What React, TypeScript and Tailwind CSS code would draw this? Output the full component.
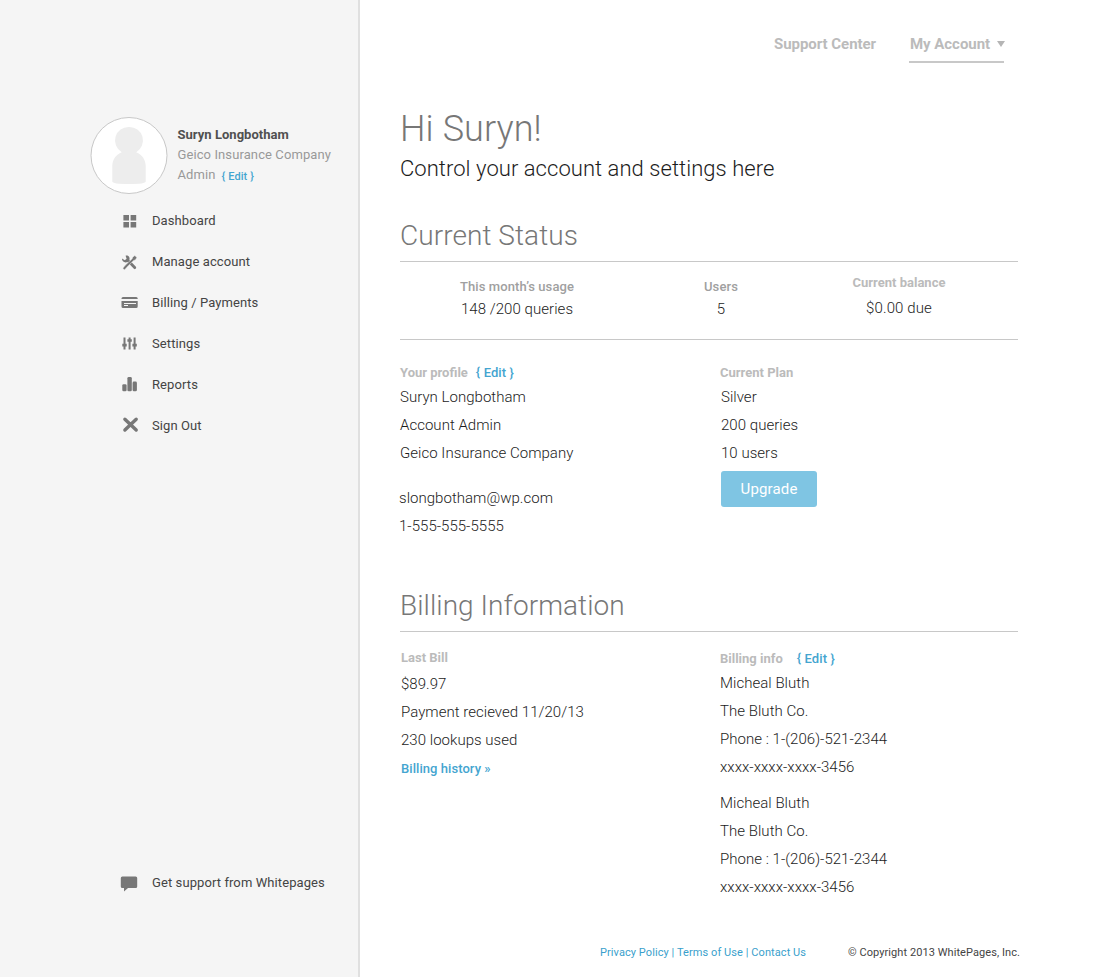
import type { ReactNode } from "react";

const navItems: { label: string; icon: ReactNode }[] = [
  {
    label: "Dashboard",
    icon: (
      <path d="M3.400 5h5.600v5.600H3.400zM10.600 5h5.600v5.600h-5.600zM3.400 12h5.600v5.600H3.400zM10.600 12h5.600v5.600h-5.600z" />
    ),
  },
  {
    label: "Manage account",
    icon: (
      <>
        <path d="M2 7.600 4.800 9.300 6.600 7.800 5.600 4.700C8.300 4.100 10.300 6.300 9.400 9L15.900 15.800C16.900 17.100 15.300 18.900 13.900 17.800L7.400 11.100C4.700 12.400 1.700 10.400 2 7.600Z" />
        <path
          d="M14.800 4.600 16.900 6.500 15.400 8.900 13.700 9.400 7.100 16.100 4.500 18.900 2.800 17.200 5.200 14.300 12.200 7.700 12.600 6.200Z"
          stroke="#f5f5f5"
          strokeWidth=".5"
        />
      </>
    ),
  },
  {
    label: "Billing / Payments",
    icon: (
      <>
        <path d="M3 5h13.200a1.500 1.500 0 0 1 1.500 1.500V7H1.500v-.5A1.500 1.500 0 0 1 3 5Z" />
        <path
          fillRule="evenodd"
          d="M1.500 9h16.200v5.500a1.500 1.500 0 0 1-1.500 1.500H3a1.500 1.500 0 0 1-1.500-1.500ZM4 11v1h12v-1ZM4 13v1h4v-1Z"
        />
      </>
    ),
  },
  {
    label: "Settings",
    icon: (
      <>
        <path d="M3.500 4.500h2v12h-2zM8.600 4.500h2v12h-2zM13.600 4.500h2v12h-2z" />
        <path d="M2.300 10.800h4.400v2.600H2.300zM7.400 6.200h4.400v2.600H7.400zM12.400 10.800h4.400v2.600h-4.400z" />
      </>
    ),
  },
  {
    label: "Reports",
    icon: (
      <>
        <rect x="2.300" y="10.300" width="4.300" height="7" rx="1.300" />
        <rect x="7.400" y="2.900" width="4.400" height="14.400" rx="1.300" />
        <rect x="12.600" y="7.600" width="4.300" height="9.700" rx="1.300" />
      </>
    ),
  },
  {
    label: "Sign Out",
    icon: (
      <path
        d="M4.900 4.200 16.200 15M16.200 4.200 4.900 15"
        stroke="#777"
        strokeWidth="3.400"
        strokeLinecap="round"
      />
    ),
  },
];

function NavRow({ label, icon }: { label: string; icon: ReactNode }) {
  return (
    <a className="flex h-[41px] items-center pl-[120px] text-[13px] tracking-[0.09px] text-[#444]">
      <svg className="mr-3 h-[21px] w-5 shrink-0" viewBox="0 0 20 21" fill="#777">
        {icon}
      </svg>
      {label}
    </a>
  );
}

function SectionTitle({ children }: { children: ReactNode }) {
  return (
    <h2 className="h-[47px] w-[618px] border-b border-[#c8c8c8] pt-px text-[28px] leading-[40px] font-light tracking-[0.06px] text-[#777]">
      {children}
    </h2>
  );
}

function Label({ children }: { children: ReactNode }) {
  return <div className="h-5 text-[13px] leading-5 font-bold text-[#bbb]">{children}</div>;
}

function Edit() {
  return <a className="font-medium tracking-[0.1px] text-[#44a5d0]">{"{ Edit }"}</a>;
}

function Lines({ items }: { items: string[] }) {
  return (
    <div className="text-[15px] leading-7 font-light tracking-[0.03px]">
      {items.map((t) => (
        <div key={t}>{t}</div>
      ))}
    </div>
  );
}

const billingContact = ["Micheal Bluth", "The Bluth Co.", "Phone : 1-(206)-521-2344", "xxxx-xxxx-xxxx-3456"];

export default function App() {
  return (
    <div className="flex h-[977px] w-[1100px] overflow-hidden bg-white font-['Roboto',sans-serif] whitespace-nowrap text-[#1c1c1c]">
      <aside className="flex w-[360px] shrink-0 flex-col border-r-2 border-[#e0e0e0] bg-[#f5f5f5] pt-[116px]">
        <div className="flex pl-[90px]">
          <svg className="h-[78px] w-[78px] shrink-0" viewBox="0 0 78 78">
            <circle cx="39" cy="39.500" r="38" fill="#fff" stroke="#c8c8c8" />
            <path
              fill="#ededed"
              d="M39 11a13.500 13.500 0 0 1 7.200 25.200C52 38.500 55.700 43.500 55.700 50V65.500Q55.700 68 39 68T22.300 65.500V50C22.300 43.500 26 38.500 31.800 36.200A13.500 13.500 0 0 1 39 11Z"
            />
          </svg>
          <div className="ml-[9.5px] pt-[9px] text-[13px] leading-5 tracking-[0.1px] text-[#999]">
            <div className="font-bold tracking-[0.03px] text-[#505050]">Suryn Longbotham</div>
            <div>Geico Insurance Company</div>
            <div className="flex h-5">
              Admin
              <a className="ml-[6px] pt-[2px] text-[11px] leading-5 font-medium text-[#44a5d0]">{"{ Edit }"}</a>
            </div>
          </div>
        </div>
        <nav className="mt-[6px]">
          {navItems.map((n) => (
            <NavRow key={n.label} {...n} />
          ))}
        </nav>
        <div className="mt-auto mb-[74px]">
          <NavRow
            label="Get support from Whitepages"
            icon={<path d="M2.300 4.500H15.700Q17.200 4.500 17.200 6V14.500Q17.200 16 15.700 16H8L4 19.500V16H2.300Q.8 16 .8 14.500V6Q.8 4.500 2.300 4.500Z" />}
          />
        </div>
      </aside>

      <main className="flex grow flex-col pl-10">
        <header className="flex h-[107px] items-start pt-[27px] pl-[374px] text-[15px] leading-[34px] font-bold tracking-[-0.04px] text-[#bbb]">
          <a className="w-[103px]">Support Center</a>
          <a className="ml-[32px] flex h-9 w-[95px] items-center border-b-2 border-[#c8c8c8] pl-px">
            My Account
            <svg className="ml-[7px] h-[6px] w-2 shrink-0" viewBox="0 0 8 6" fill="#b5b5b5">
              <path d="M0 0h8L4 6z" />
            </svg>
          </a>
        </header>

        <h1 className="h-12 text-[36px] leading-[44px] font-light tracking-[0.1px] text-[#777]">Hi Suryn!</h1>
        <p className="mb-[32px] text-[22px] leading-7 font-light tracking-[0.05px]">
          Control your account and settings here
        </p>

        <SectionTitle>Current Status</SectionTitle>
        <div className="flex h-[78px] w-[618px] border-b border-[#c8c8c8] text-center text-[15px] leading-6 font-light">
          <div className="w-[234px] pt-[14px]">
            <div className="-mb-px h-[22px] text-[13px] leading-[22px] font-medium tracking-[0.1px] text-[#a0a0a0]">This month’s usage</div>
            <div className="tracking-[0.05px]">148 /200 queries</div>
          </div>
          <div className="w-[174px] pt-[14px]">
            <div className="-mb-px h-[22px] text-[13px] leading-[22px] font-medium tracking-[0.1px] text-[#a0a0a0]">Users</div>
            <div>5</div>
          </div>
          <div className="w-[182px] pt-[10px]">
            <div className="mb-[2px] h-[22px] text-[13px] leading-[22px] font-bold text-[#bbb]">Current balance</div>
            <div className="tracking-[0.1px]">$0.00 due</div>
          </div>
        </div>

        <div className="flex h-[245px] pt-[23px]">
          <div className="w-[320px]">
            <Label>
              Your profile<span className="ml-2"><Edit /></span>
            </Label>
            <Lines items={["Suryn Longbotham", "Account Admin", "Geico Insurance Company"]} />
            <div className="mt-[17px] -ml-px">
              <Lines items={["slongbotham@wp.com", "1-555-555-5555"]} />
            </div>
          </div>
          <div>
            <Label>Current Plan</Label>
            <div className="pl-px">
              <Lines items={["Silver", "200 queries", "10 users"]} />
              <button className="mt-1 block h-9 w-24 rounded-[3px] bg-[#7fc5e3] text-[15px] tracking-[0.15px] text-white">
                Upgrade
              </button>
            </div>
          </div>
        </div>

        <SectionTitle>Billing Information</SectionTitle>
        <div className="flex h-[309px]">
          <div className="w-[320px] pt-4 pl-px">
            <Label>Last Bill</Label>
            <div className="mt-[2px]">
              <Lines items={["$89.97", "Payment recieved 11/20/13", "230 lookups used"]} />
            </div>
            <a className="block text-[13px] leading-[29px] font-medium tracking-[0.06px] text-[#44a5d0]">Billing history »</a>
          </div>
          <div className="pt-[17px]">
            <Label>
              Billing info<span className="ml-[14px]"><Edit /></span>
            </Label>
            <Lines items={billingContact} />
            <div className="mt-2">
              <Lines items={billingContact} />
            </div>
          </div>
        </div>

        <footer className="flex pl-[200px] text-[11px] leading-6">
          <div className="w-[248px] tracking-[0.075px] text-[#3a9fcc]">
            <a>Privacy Policy</a> | <a>Terms of Use</a> | <a>Contact Us</a>
          </div>
          <div className="tracking-[0.07px] text-[#444]">© Copyright 2013 WhitePages, Inc.</div>
        </footer>
      </main>
    </div>
  );
}
